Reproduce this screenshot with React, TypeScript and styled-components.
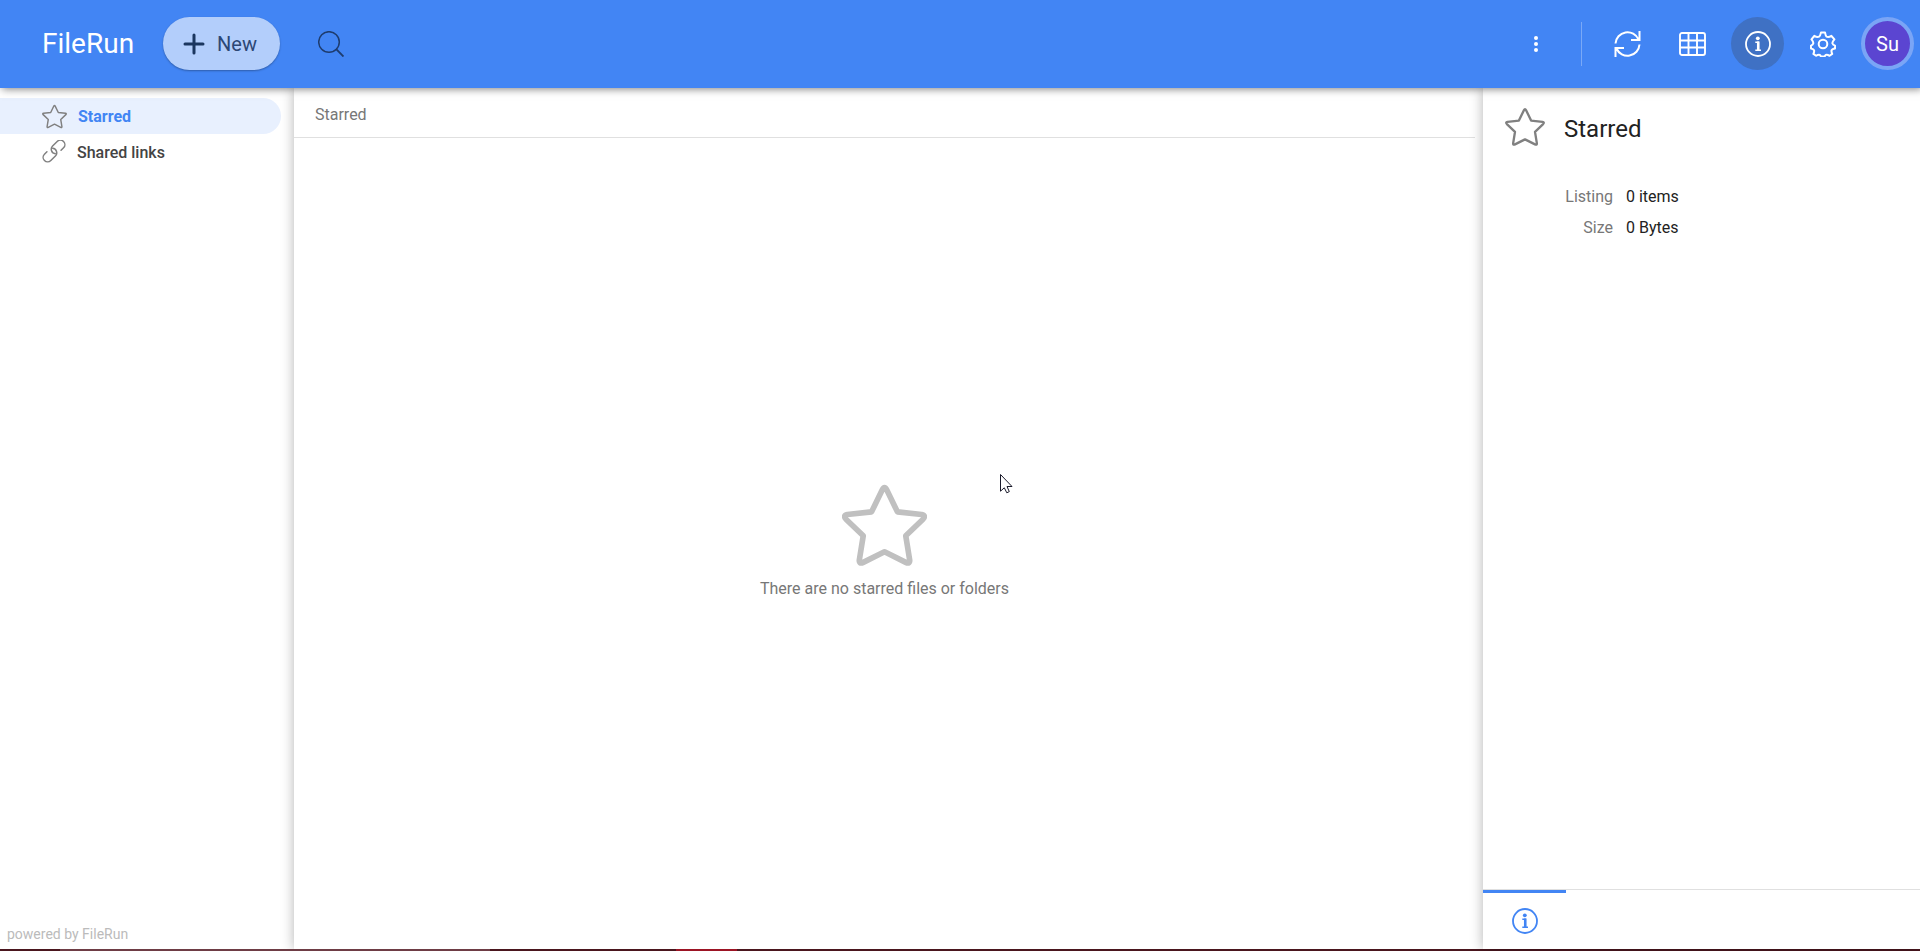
import React from 'react';
import styled, { createGlobalStyle } from 'styled-components';

const GlobalStyle = createGlobalStyle`
  *, *::before, *::after { box-sizing: border-box; }
  body { margin: 0; background: #fff; font-family: Roboto, "Liberation Sans", sans-serif; font-size: 16px; line-height: 20px; color: #222; }
  button { font: inherit; border: 0; padding: 0; background: none; cursor: pointer; }
  a { color: inherit; text-decoration: none; }
  h1, h2, p, dl, dd, ul { margin: 0; padding: 0; }
  svg { display: block; flex: none; }
`;

const Page = styled.div`
  height: 100vh;
  display: flex;
  flex-direction: column;
  overflow: hidden;
`;

const Header = styled.header`
  position: relative;
  z-index: 2;
  flex: none;
  height: 88px;
  padding: 0 6px 1px 42px;
  display: flex;
  align-items: center;
  background: #4285f4;
  color: #fff;
  box-shadow: 2px 1px 8px rgba(0, 0, 0, 0.5);
`;

const Brand = styled.h1`
  font-size: 28px;
  line-height: 32px;
  font-weight: 400;
`;

const NewButton = styled.button`
  height: 53px;
  width: 117px;
  margin-left: 29px;
  padding: 0 0 0 20px;
  display: flex;
  align-items: center;
  gap: 12px;
  border-radius: 27px;
  background: #b3cefb;
  color: #2c4775;
  font-size: 20px;
  line-height: 24px;
  box-shadow: 0 1px 2px rgba(0, 0, 0, 0.3);
`;

const RoundButton = styled.button<{ $active?: boolean }>`
  flex: none;
  width: 53px;
  height: 53px;
  display: flex;
  align-items: center;
  justify-content: center;
  border-radius: 50%;
  color: #fff;
  background: ${(p) => (p.$active ? '#3f71c4' : 'transparent')};
`;

const SearchButton = styled(RoundButton)`
  margin-left: 24px;
  color: #1e3c6e;
`;

const Toolbar = styled.div`
  margin-left: auto;
  display: flex;
  align-items: center;
  gap: 12px;
`;

const Separator = styled.span`
  width: 1px;
  height: 44px;
  margin: 0 7px;
  background: #7aa9f7;
`;

const Avatar = styled(RoundButton)`
  border: 4px solid #7aa5f6;
  background: #5b45d1;
  font-size: 20px;
`;

const Body = styled.div`
  flex: 1;
  min-height: 0;
  display: flex;
`;

const Sidebar = styled.aside`
  flex: none;
  width: 294px;
  padding: 10px 0 5px;
  display: flex;
  flex-direction: column;
  justify-content: space-between;
`;

const NavLink = styled.a<{ $active?: boolean }>`
  height: 36px;
  margin-right: 13px;
  padding-left: 42px;
  display: flex;
  align-items: center;
  gap: 11px;
  border-radius: 0 18px 18px 0;
  font-weight: ${(p) => (p.$active ? 700 : 500)};
  line-height: 22px;
  color: ${(p) => (p.$active ? '#4285f4' : '#444')};
  background: ${(p) => (p.$active ? '#e8f0fe' : 'transparent')};
  svg { color: #808080; }
  span { padding-top: 2px; }
`;

const Powered = styled.a`
  padding: 0 7px;
  font-size: 14px;
  color: #bbb;
`;

const Main = styled.main`
  flex: 1;
  min-width: 0;
  padding-right: 8px;
  display: flex;
  flex-direction: column;
  background: #fff;
  box-shadow: 0 0 12px rgba(0, 0, 0, 0.3);
`;

const Breadcrumb = styled.nav`
  flex: none;
  height: 50px;
  padding: 4px 21px 0;
  display: flex;
  align-items: center;
  border-bottom: 1px solid #e0e0e0;
  color: #777;
`;

const Empty = styled.div`
  flex: 1;
  padding-bottom: 6px;
  display: flex;
  flex-direction: column;
  align-items: center;
  justify-content: center;
  gap: 11px;
  color: #777;
  svg { color: #c0c0c0; }
`;

const Details = styled.aside`
  position: relative;
  flex: none;
  width: 437px;
  display: flex;
  flex-direction: column;
  background: #fff;
  box-shadow: 0 0 12px rgba(0, 0, 0, 0.3);
`;

const DetailsHead = styled.div`
  padding: 19px 22px 0;
  display: flex;
  align-items: flex-start;
  gap: 19px;
  svg { color: #808080; }
`;

const Title = styled.h2`
  font-size: 24px;
  line-height: 44px;
  font-weight: 400;
`;

const Facts = styled.dl`
  flex: 1;
  padding-top: 30px;
  display: grid;
  grid-template-columns: 130px 1fr;
  grid-auto-rows: 31px;
  align-content: start;
  align-items: center;
  column-gap: 13px;
  dt { text-align: right; color: #777; }
`;

const Tabs = styled.div`
  flex: none;
  height: 60px;
  border-top: 1px solid #e0e0e0;
`;

const Tab = styled.button`
  width: 83px;
  height: 59px;
  display: flex;
  align-items: center;
  justify-content: center;
  border-top: 3px solid #4285f4;
  color: #4285f4;
`;

const Strip = styled.footer`
  flex: none;
  height: 2px;
  background: linear-gradient(90deg, #4a161e 60px, #6e3d45 60px 490px, #4a161e 490px 676px, #9c1424 676px 737px, #4a161e 737px);
`;

const Pointer = styled.svg`
  position: absolute;
  z-index: 3;
  left: 1000px;
  top: 474px;
`;

const Star = ({ size, stroke }: { size: number; stroke: number }) => (
  <svg width={size} height={size} viewBox="0 -6 256 256" fill="none" stroke="currentColor" strokeWidth={stroke} strokeLinejoin="round" aria-hidden="true">
    <path d="M121 15Q128 1 135 15L167 81L240 89Q254 92 244 103L192 153L204 227Q204 239 192 233L128 201L64 233Q52 239 52 227L64 153L12 103Q2 92 16 89L89 81Z" />
  </svg>
);

const LinkIcon = () => (
  <svg width="24" height="24" viewBox="-12 -11 24 24" fill="none" stroke="currentColor" strokeWidth="1.500" strokeLinecap="round" aria-hidden="true">
    <g transform="rotate(-45)">
      <path d="M5.500 4.500H9A4.500 4.500 0 0 0 9 -4.500H2.500A4.500 4.500 0 0 0 -1 2.800" />
      <path d="M-5.500 -4.500H-9A4.500 4.500 0 0 0 -9 4.500H-2.500A4.500 4.500 0 0 0 1 -2.800" />
    </g>
  </svg>
);

const InfoIcon = () => (
  <svg width="26" height="26" viewBox="0 0 26 26" fill="none" stroke="currentColor" strokeWidth="1.800" aria-hidden="true">
    <circle cx="13" cy="13" r="12" />
    <circle cx="12.800" cy="7.300" r="1.900" fill="currentColor" stroke="none" />
    <path d="M10.300 11.200H13.400V19M10.300 19.200H16" strokeWidth="1.600" />
    <path d="M13.200 10.500V19.500" strokeWidth="2.500" />
  </svg>
);

export default function App() {
  return (
    <Page>
      <GlobalStyle />
      <Header>
        <Brand>FileRun</Brand>
        <NewButton type="button">
          <svg width="22" height="22" viewBox="0 0 22 22" stroke="#1b365f" strokeWidth="3" strokeLinecap="round" aria-hidden="true">
            <path d="M11 2V20M2 11H20" />
          </svg>
          New
        </NewButton>
        <SearchButton type="button" aria-label="Search">
          <svg width="26" height="26" viewBox="0 0 26 26" fill="none" stroke="currentColor" strokeWidth="1.500" aria-hidden="true">
            <circle cx="11" cy="11" r="10.300" />
            <path d="M18.200 18.200L25.500 25.500" strokeWidth="1.900" />
          </svg>
        </SearchButton>
        <Toolbar>
          <RoundButton type="button" aria-label="More options">
            <svg width="6" height="18" viewBox="0 0 6 18" fill="currentColor" aria-hidden="true">
              <circle cx="3" cy="3" r="2" />
              <circle cx="3" cy="9" r="2" />
              <circle cx="3" cy="15" r="2" />
            </svg>
          </RoundButton>
          <Separator />
          <RoundButton type="button" aria-label="Refresh">
            <svg width="27" height="26" viewBox="0 0 26 26" fill="none" stroke="currentColor" strokeWidth="2" aria-hidden="true">
              <path d="M1 12.500A12 12 0 0 1 24 8.500M25 0V8.900H16.500" />
              <path d="M25 13.500A12 12 0 0 1 2 17.500M1 26V17.100H9.500" />
            </svg>
          </RoundButton>
          <RoundButton type="button" aria-label="Grid view">
            <svg width="27" height="24" viewBox="0 0 27 24" fill="none" stroke="currentColor" strokeWidth="1.900" aria-hidden="true">
              <rect x="1" y="1" width="25" height="22" rx="2" />
              <path d="M1 8.500H26M1 15.500H26M9.500 1V23M18 1V23" />
            </svg>
          </RoundButton>
          <RoundButton type="button" $active aria-label="Details">
            <InfoIcon />
          </RoundButton>
          <RoundButton type="button" aria-label="Settings">
            <svg width="26" height="26" viewBox="0 0 26 26" fill="none" stroke="currentColor" strokeWidth="2" strokeLinejoin="round" aria-hidden="true">
              <circle cx="13" cy="13" r="4.300" />
              <path d="M11 1h4q.6 3.500 1.600 4.200q1.800 1 4.800-.8l3 3.600q-2.300 2.600-2 4q.3 1.500 2.600 2.200v2.800q-3 .4-3.500 2q-.3 1.500.7 3.500l-2.600 1.900q-2.400-1.600-3.700-1q-1 .5-1.100 1.600h-4q-.2-1-1.100-1.600q-1.300-.6-3.600 1l-2.700-1.900q1-2 .7-3.500q-.5-1.600-3.100-2v-2.800q2-.7 2.300-2.200q.3-1.400-1.800-4l2.800-3.600q3 1.800 4.800.8q1.200-.7 1.900-4.200z" transform="translate(0 .4)" />
            </svg>
          </RoundButton>
          <Avatar type="button">Su</Avatar>
        </Toolbar>
      </Header>
      <Body>
        <Sidebar>
          <nav>
            <NavLink href="#starred" $active><Star size={25} stroke={15} /><span>Starred</span></NavLink>
            <NavLink href="#links"><LinkIcon /><span>Shared links</span></NavLink>
          </nav>
          <Powered href="#about">powered by FileRun</Powered>
        </Sidebar>
        <Main>
          <Breadcrumb aria-label="Breadcrumb">Starred</Breadcrumb>
          <Empty>
            <Star size={85} stroke={17} />
            <p>There are no starred files or folders</p>
          </Empty>
        </Main>
        <Details>
          <DetailsHead>
            <Star size={40} stroke={15} />
            <Title>Starred</Title>
          </DetailsHead>
          <Facts>
            <dt>Listing</dt>
            <dd>0 items</dd>
            <dt>Size</dt>
            <dd>0 Bytes</dd>
          </Facts>
          <Tabs>
            <Tab type="button" aria-label="Details tab"><InfoIcon /></Tab>
          </Tabs>
        </Details>
      </Body>
      <Strip />
      <Pointer width="13" height="20" viewBox="0 0 13 20" fill="#fff" stroke="#1a1a2a" strokeWidth="1" aria-hidden="true">
        <path d="M.5.5V17.200L4.300 13.800L6.800 18.800L9.300 17.600L7 12.500H12Z" />
      </Pointer>
    </Page>
  );
}
